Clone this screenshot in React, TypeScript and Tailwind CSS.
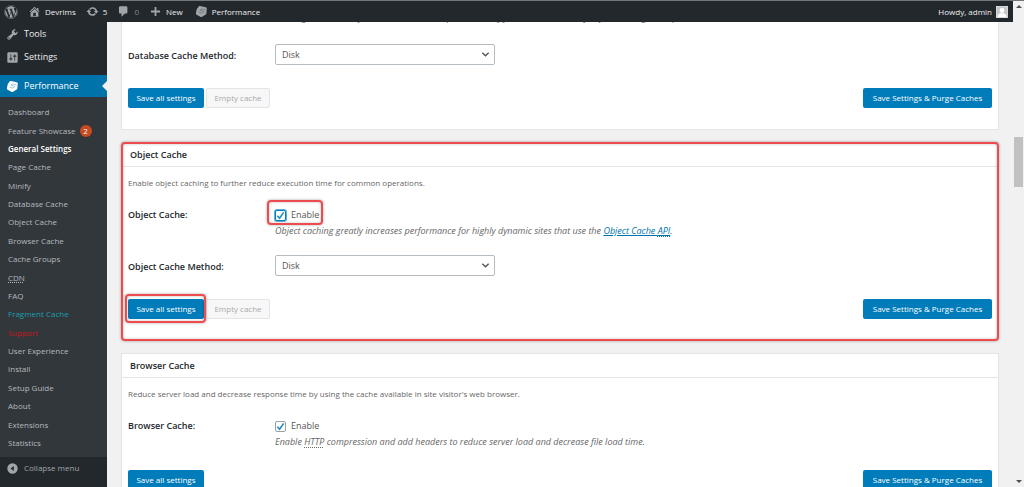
import React from 'react';
import { FaWordpress } from 'react-icons/fa';

type IconProps = { d: string; className?: string };

const ICONS = {
  home: 'M16 8.5l1.53 1.53-1.06 1.06L10 4.6l-6.47 6.49-1.06-1.06L10 2.5l4 4v-2h2v4zm-6-2.46l6 5.99V18H4v-5.97zM12 17v-5H8v5h4z',
  update: 'M10.2 3.28c3.53 0 6.43 2.61 6.92 6h2.08l-3.5 4-3.5-4h2.32c-.45-1.97-2.21-3.45-4.32-3.45-1.45 0-2.73.71-3.54 1.78L4.95 5.66C6.23 4.2 8.11 3.28 10.2 3.28zm-.4 13.44c-3.52 0-6.43-2.61-6.92-6H.8l3.5-4c1.17 1.33 2.33 2.67 3.5 4H5.48c.45 1.97 2.21 3.45 4.32 3.45 1.45 0 2.73-.71 3.54-1.78l1.71 1.95c-1.28 1.46-3.15 2.38-5.25 2.38z',
  comment: 'M5 2h9c1.1 0 2 .9 2 2v7c0 1.1-.9 2-2 2h-2l-5 5v-5H5c-1.1 0-2-.9-2-2V4c0-1.1.9-2 2-2z',
  plus: 'M17 8.6v2.8h-5.6V17H8.6v-5.6H3V8.6h5.6V3h2.8v5.6z',
  tools: 'M16.68 9.77c-1.34 1.34-3.3 1.67-4.95.99l-5.41 6.52c-.99.99-2.59.99-3.58 0s-.99-2.59 0-3.57l6.52-5.42c-.68-1.65-.35-3.61.99-4.95 1.28-1.28 3.12-1.62 4.72-1.06l-2.89 2.89 2.82 2.82 2.86-2.87c.53 1.58.18 3.39-1.08 4.65zM3.81 16.21c.4.39 1.04.39 1.43 0 .4-.4.4-1.04 0-1.43-.39-.4-1.03-.4-1.43 0-.39.39-.39 1.03 0 1.43z',
  settings: 'M18 16V4c0-1.1-.9-2-2-2H4c-1.1 0-2 .9-2 2v12c0 1.1.9 2 2 2h12c1.1 0 2-.9 2-2zM8 11h1c.55 0 1 .45 1 1s-.45 1-1 1H8v1.5c0 .28-.22.5-.5.5s-.5-.22-.5-.5V13H6c-.55 0-1-.45-1-1s.45-1 1-1h1V5.5c0-.28.22-.5.5-.5s.5.22.5.5V11zm5-2h-1c-.55 0-1-.45-1-1s.45-1 1-1h1V5.5c0-.28.22-.5.5-.5s.5.22.5.5V7h1c.55 0 1 .45 1 1s-.45 1-1 1h-1v5.5c0 .28-.22.5-.5.5s-.5-.22-.5-.5V9z',
  collapse: 'M10 2a8 8 0 100 16 8 8 0 000-16zm2 12l-5-4 5-4z',
};

const Icon: React.FC<IconProps> = ({ d, className = 'w-[13px] h-[13px]' }) => (
  <svg viewBox="0 0 20 20" fill="currentColor" fillRule="evenodd" className={`shrink-0 ${className}`} aria-hidden="true">
    <path d={d} />
  </svg>
);

const CubeIcon: React.FC<{ line: string }> = ({ line }) => (
  <svg viewBox="0 0 20 20" className="w-[13px] h-[13px] shrink-0" aria-hidden="true">
    <path d="M7.5 1.5l9 2c1 .2 1.7 1 1.6 2l-.6 7.5c0 .7-.4 1.3-1 1.7l-5.500 3.500c-.6.4-1.300.4-2 .1l-6.500-3.300c-.8-.4-1.200-1.200-1.100-2L2.500 7c.1-.6.4-1.100.9-1.500L6 2.100c.4-.5 1-.7 1.500-.6z" fill="currentColor" />
    <path d="M16 7.200L10.500 6 7.500 7.800l6.500 2.200-3.500 2.500-5-1.500" fill="none" stroke={line} strokeWidth="1.1" strokeLinejoin="round" />
  </svg>
);

const SUBMENU = [
  { label: 'Dashboard' },
  { label: 'Feature Showcase', count: 2 },
  { label: 'General Settings', tone: 'font-semibold text-white' },
  { label: 'Page Cache' },
  { label: 'Minify' },
  { label: 'Database Cache' },
  { label: 'Object Cache' },
  { label: 'Browser Cache' },
  { label: 'Cache Groups' },
  { label: 'CDN', tone: 'text-[#b4b9be] underline decoration-dotted underline-offset-1' },
  { label: 'FAQ' },
  { label: 'Fragment Cache', tone: 'text-[#1d9fae]' },
  { label: 'Support', tone: 'text-[#c3181c]' },
  { label: 'User Experience' },
  { label: 'Install' },
  { label: 'Setup Guide' },
  { label: 'About' },
  { label: 'Extensions' },
  { label: 'Statistics' },
];

const AdminBar: React.FC = () => (
  <header className="flex h-[21px] shrink-0 items-center bg-[#23282d] pl-1 pr-[5px] text-[#eeeeee]">
    <a href="#about-wp" aria-label="About WordPress" className="text-[#a0a5aa]"><FaWordpress className="w-[14px] h-[14px]" /></a>
    <a href="#site" className="ml-[10px] flex items-center gap-1">
      <span className="text-[#a0a5aa]"><Icon d={ICONS.home} /></span>Devrims
    </a>
    <a href="#updates" className="ml-[10px] flex items-center gap-1">
      <span className="text-[#a0a5aa]"><Icon d={ICONS.update} /></span>5
    </a>
    <a href="#comments" className="ml-[10px] flex items-center gap-1 text-[#82878c]">
      <span className="text-[#a0a5aa]"><Icon d={ICONS.comment} /></span>0
    </a>
    <a href="#new" className="ml-[10px] flex items-center gap-1">
      <span className="text-[#a0a5aa]"><Icon d={ICONS.plus} /></span>New
    </a>
    <a href="#w3tc" className="ml-3 flex items-center gap-1">
      <span className="text-[#a0a5aa]"><CubeIcon line="#6d7277" /></span>Performance
    </a>
    <a href="#profile" className="ml-auto flex items-center gap-1">
      Howdy, admin
      <svg viewBox="0 0 12 12" className="w-3 h-3" aria-hidden="true">
        <rect width="12" height="12" fill="#d5d7d9" />
        <rect x="1" y="1" width="10" height="10" fill="#c3c6c9" />
        <circle cx="6" cy="4.5" r="2.4" fill="#fff" />
        <path d="M1.5 11c0-2.500 1.500-3.500 3-3.800h3c1.500.3 3 1.300 3 3.800z" fill="#fff" />
      </svg>
    </a>
  </header>
);

const Sidebar: React.FC = () => (
  <nav className="flex w-[107px] shrink-0 flex-col bg-[#23282d] text-[#eeeeee]">
    <a href="#tools" className="flex h-6 items-center gap-[5px] pl-[6px] text-[9px]">
      <span className="text-[#a0a5aa]"><Icon d={ICONS.tools} /></span>Tools
    </a>
    <a href="#settings" className="flex h-[22px] items-center gap-[5px] pl-[6px] text-[9px]">
      <span className="text-[#a0a5aa]"><Icon d={ICONS.settings} /></span>Settings
    </a>
    <a href="#performance" className="relative mt-[7px] flex h-[22px] items-center gap-[5px] bg-[#0073aa] pl-[6px] text-[9px] text-white">
      <CubeIcon line="#7fb9d5" />Performance
      <span className="absolute right-0 top-[6px] border-y-[5px] border-r-[5px] border-y-transparent border-r-[#f1f1f1]" />
    </a>
    <ul className="flex flex-1 flex-col bg-[#32373c] pt-[6px] pb-[5px]">
      {SUBMENU.map((item) => (
        <li key={item.label} className="flex flex-1 items-center gap-1 pl-2">
          <a href="#menu" className={item.tone ?? 'text-[#b4b9be]'}>{item.label}</a>
          {item.count && (
            <span className="flex h-3 w-3 items-center justify-center rounded-full bg-[#ca4a1f] text-[8px] text-white">{item.count}</span>
          )}
        </li>
      ))}
    </ul>
    <button type="button" className="flex h-[30px] items-start gap-[5px] pl-[6px] pt-[5px] text-[#a0a5aa]">
      <Icon d={ICONS.collapse} />Collapse menu
    </button>
  </nav>
);

const Marker: React.FC<{ className: string }> = ({ className }) => (
  <span className={`pointer-events-none absolute rounded-[4px] border-2 border-[#ee4b4f] shadow-[0_0_3px_rgba(0,0,0,0.35),inset_0_0_3px_rgba(0,0,0,0.25)] ${className}`} />
);

const Panel: React.FC<{ title: string; intro: string; marked?: boolean; children: React.ReactNode }> = ({ title, intro, marked, children }) => (
  <section className="relative border border-[#e2e4e7] bg-white">
    <h2 className="flex h-6 items-center border-b border-[#e5e5e5] pl-2 text-[9px] font-semibold text-[#23282d]">{title}</h2>
    <div className="px-[6px] pt-2 pb-[21px]">
      <p className="leading-4 text-[#666666]">{intro}</p>
      {children}
    </div>
    {marked && <Marker className="-inset-px" />}
  </section>
);

const EnableRow: React.FC<{ id: string; label: string; marked?: boolean; children: React.ReactNode }> = ({ id, label, marked, children }) => (
  <div className="mt-4 flex leading-4">
    <div className="w-[147px] shrink-0 text-[9px] font-semibold text-[#23282d]">{label}</div>
    <div>
      <label htmlFor={id} className="relative flex h-4 w-fit items-center gap-[5px] text-[9px] text-[#555555]">
        <span className={`relative flex h-[11px] w-[11px] items-center justify-center rounded-[2px] border bg-white ${marked ? 'border-[#007cba] ring-1 ring-[#007cba]/60' : 'border-[#9aa0a6]'}`}>
          <input id={id} type="checkbox" defaultChecked className="peer absolute inset-0 appearance-none" />
          <svg viewBox="0 0 10 10" className="invisible h-[9px] w-[9px] peer-checked:visible" aria-hidden="true">
            <path d="M1.5 5.2L4 8l4.500-6.500" fill="none" stroke="#1e8cbe" strokeWidth="1.8" />
          </svg>
        </span>
        Enable
        {marked && <Marker className="-left-2 -right-1 -top-[7px] -bottom-[2px]" />}
      </label>
      <p className="text-[9px] italic text-[#666666]">{children}</p>
    </div>
  </div>
);

const MethodRow: React.FC<{ id: string; label: string }> = ({ id, label }) => (
  <div className="mt-4 flex h-6 items-start">
    <label htmlFor={id} className="w-[147px] shrink-0 pt-1 text-[9px] leading-4 font-semibold text-[#23282d]">{label}</label>
    <div className="relative">
      <select id={id} defaultValue="Disk" className="h-[21px] w-[220px] appearance-none rounded-[2px] border border-[#b5bcc2] bg-white pl-[6px] text-[9px] text-[#555555]">
        <option>Disk</option>
      </select>
      <svg viewBox="0 0 10 10" className="pointer-events-none absolute right-[5px] top-[6px] h-[9px] w-[9px]" aria-hidden="true">
        <path d="M1.5 3L5 6.500 8.500 3" fill="none" stroke="#555" strokeWidth="1.6" />
      </svg>
    </div>
  </div>
);

const Actions: React.FC<{ marked?: boolean; canEmpty?: boolean }> = ({ marked, canEmpty }) => (
  <div className="mt-5 flex gap-[2px] text-[8px]">
    <div className="relative">
      <button type="button" className="h-5 w-19 rounded-[2px] bg-[#007cba] text-white">Save all settings</button>
      {marked && <Marker className="-left-[3px] -right-[2px] -top-[5px] -bottom-1" />}
    </div>
    {canEmpty && (
      <button type="button" disabled className="h-5 w-16 rounded-[2px] border border-[#e2e4e7] bg-[#f7f7f7] text-[#a7aaad]">Empty cache</button>
    )}
    <button type="button" className="ml-auto h-5 w-[129px] rounded-[2px] bg-[#007cba] text-white">Save Settings &amp; Purge Caches</button>
  </div>
);

const Abbr: React.FC<{ title: string; children: React.ReactNode }> = ({ title, children }) => (
  <abbr title={title} className="underline decoration-dotted underline-offset-2">{children}</abbr>
);

const ScrollBar: React.FC = () => (
  <div className="flex w-[11px] shrink-0 flex-col items-center bg-[#f1f1f1] pt-1 pb-1">
    <span className="border-x-[3px] border-b-[3px] border-x-transparent border-b-[#505050]" />
    <span className="mt-[129px] h-[50px] w-[9px] bg-[#c1c1c1]" />
    <span className="mt-auto border-x-[3px] border-t-[3px] border-x-transparent border-t-[#505050]" />
  </div>
);

const App: React.FC = () => (
  <div className="flex h-screen overflow-hidden border-t border-[#6f777c] bg-[#f1f1f1] font-['Open_Sans','Noto_Sans',sans-serif] text-[8px]">
    <div className="flex min-w-0 flex-1 flex-col">
      <AdminBar />
      <div className="flex min-h-0 flex-1">
        <Sidebar />
        <main className="flex min-w-0 flex-1 flex-col gap-3 overflow-hidden pl-[14px] pr-[14px]">
          {/* Database cache panel, scrolled partly under the admin bar */}
          <section className="-mt-3 border border-t-0 border-[#e2e4e7] bg-white px-[6px] pb-[21px]">
            <p className="pl-[147px] pb-[2px] text-[9px] leading-4 italic text-[#666666]">
              Caching database objects decreases the response time of your site. Best used if object caching is not possible.
            </p>
            <MethodRow id="db-method" label="Database Cache Method:" />
            <Actions canEmpty />
          </section>

          <Panel title="Object Cache" intro="Enable object caching to further reduce execution time for common operations." marked>
            <EnableRow id="object-cache" label="Object Cache:" marked>
              Object caching greatly increases performance for highly dynamic sites that use the{' '}
              <a href="#api" className="text-[#0073aa] underline">Object Cache <Abbr title="Application Programming Interface">API</Abbr></a>.
            </EnableRow>
            <MethodRow id="object-method" label="Object Cache Method:" />
            <Actions marked canEmpty />
          </Panel>

          <Panel title="Browser Cache" intro="Reduce server load and decrease response time by using the cache available in site visitor's web browser.">
            <EnableRow id="browser-cache" label="Browser Cache:">
              Enable <Abbr title="Hypertext Transfer Protocol">HTTP</Abbr> compression and add headers to reduce server load and decrease file load time.
            </EnableRow>
            <Actions />
          </Panel>
        </main>
      </div>
    </div>
    <ScrollBar />
  </div>
);

export default App;
